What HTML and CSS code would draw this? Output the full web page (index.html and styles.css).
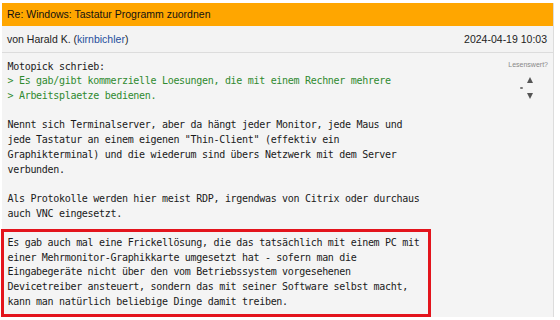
FILE: index.html
```html
<!DOCTYPE html>
<html lang="de">
<head>
    <meta charset="UTF-8">
    <title>Re: Windows: Tastatur Programm zuordnen</title>
    <link rel="stylesheet" href="styles.css">
</head>
<body>
    <div class="post">
        <div class="post-title">Re: Windows: Tastatur Programm zuordnen</div>
        <div class="post-meta">
            <span>von Harald K. (<a href="#">kirnbichler</a>)</span>
            <span class="date">2024-04-19 10:03</span>
        </div>
        <div class="post-body">
            <div class="rating">
                <div class="rating-label">Lesenswert?</div>
                <div class="rating-votes">
                    <span class="dot"></span>
                    <div class="arrows">
                        <span class="arrow up"></span>
                        <span class="arrow down"></span>
                    </div>
                </div>
            </div>
            <p>Motopick schrieb:
<span class="quote">&gt; Es gab/gibt kommerzielle Loesungen, die mit einem Rechner mehrere
&gt; Arbeitsplaetze bedienen.</span></p>
            <p>Nennt sich Terminalserver, aber da hängt jeder Monitor, jede Maus und
jede Tastatur an einem eigenen "Thin-Client" (effektiv ein
Graphikterminal) und die wiederum sind übers Netzwerk mit dem Server
verbunden.</p>
            <p>Als Protokolle werden hier meist RDP, irgendwas von Citrix oder durchaus
auch VNC eingesetzt.</p>
            <p class="highlight">Es gab auch mal eine Frickellösung, die das tatsächlich mit einem PC mit
einer Mehrmonitor-Graphikkarte umgesetzt hat - sofern man die
Eingabegeräte nicht über den vom Betriebssystem vorgesehenen
Devicetreiber ansteuert, sondern das mit seiner Software selbst macht,
kann man natürlich beliebige Dinge damit treiben.</p>
        </div>
    </div>
</body>
</html>
```

FILE: styles.css
```css
body {
    margin: 0;
    padding: 3px 0 0 2px;
    background: #fff;
    font-family: "Liberation Sans", Arial, sans-serif;
    color: #222;
}
.post {
    width: 552px;
    background: #f4f4f4;
    border-right: 1px solid #dcdcdc;
    box-sizing: border-box;
}
.post-title {
    background: #ffa600;
    color: #111;
    font-size: 10.5px;
    height: 23px;
    line-height: 23px;
    padding: 0 5px;
}
.post-meta {
    display: flex;
    justify-content: space-between;
    height: 26px;
    line-height: 26px;
    padding: 0 6px 0 5px;
    font-size: 10.5px;
    background: #f3f3f3;
    border-bottom: 1px solid #dcdcdc;
}
.post-meta a {
    color: #1f4e9c;
    text-decoration: none;
}
.post-body {
    padding: 6.6px 5px 0 5.5px;
}
.post-body p {
    margin: 0;
    white-space: pre-line;
    font-family: "DejaVu Sans Mono", "Liberation Mono", monospace;
    font-size: 10px;
    letter-spacing: -0.3px;
    line-height: 14.7px;
    color: #1a1a1a;
}
.post-body p + p {
    margin-top: 14.7px;
}
.quote {
    color: #2f8a2f;
}
.post-body p.highlight {
    margin: 7.6px 0 0 -6.5px;
    width: 430px;
    box-sizing: border-box;
    border: 3px solid #e3141c;
    padding: 4px 8px 4.4px 3.5px;
}
.rating {
    float: right;
    width: 44px;
    margin-top: 1.5px;
    text-align: right;
}
.rating-label {
    font-size: 7px;
    line-height: 8px;
    color: #888;
}
.rating-votes {
    display: flex;
    justify-content: flex-end;
    align-items: center;
    gap: 4px;
    margin-top: 8px;
    padding-right: 15.5px;
}
.dot {
    width: 2.5px;
    height: 2.5px;
    border-radius: 50%;
    background: #777;
}
.arrows {
    display: flex;
    flex-direction: column;
    gap: 10px;
}
.arrow {
    width: 0;
    height: 0;
    border-left: 3.5px solid transparent;
    border-right: 3.5px solid transparent;
}
.arrow.up {
    border-bottom: 6px solid #555;
}
.arrow.down {
    border-top: 6px solid #555;
}
```
